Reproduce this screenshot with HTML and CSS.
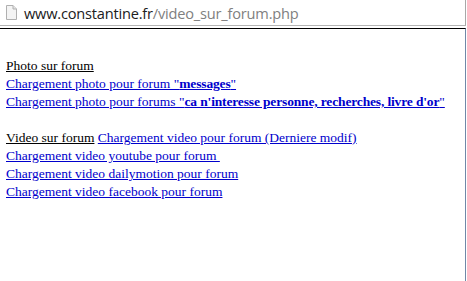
FILE: index.html
```html
<!DOCTYPE html>
<html>
<head>
	<meta charset="UTF-8">
	<title>video sur forum</title>
	<link rel="stylesheet" href="styles.css">
</head>
<body>
	<div class="frame">
		<div class="address-bar">
			<svg class="page-icon" width="11" height="15" viewBox="0 0 11 15">
				<path d="M0.5 0.5 H7 L10.5 4 V14.5 H0.5 Z" fill="#f4f4f4" stroke="#b0b0b0"/>
				<path d="M7 0.5 V4 H10.5" fill="#e4e4e4" stroke="#b0b0b0"/>
			</svg>
			<span class="host">www.constantine.fr</span><span class="path">/video_sur_forum.php</span>
		</div>
		<div class="page">
			<br>
			<u>Photo sur forum</u><br>
			<a href="#">Chargement photo pour forum "<b>messages</b>"</a><br>
			<a href="#">Chargement photo pour forums "<b>ca n'interesse personne, recherches, livre d'or</b>"</a><br>
			<br>
			<u>Video sur forum</u> <a href="#">Chargement video pour forum (Derniere modif)</a><br>
			<a href="#">Chargement video youtube pour forum&nbsp;</a><br>
			<a href="#">Chargement video dailymotion pour forum</a><br>
			<a href="#">Chargement video facebook pour forum</a>
		</div>
	</div>
</body>
</html>
```

FILE: styles.css
```css
html {
	background-color: #fff;
}
body {
	margin: 0;
	padding: 0;
	background-color: #fff;
}
.frame {
	width: 466px;
	height: 281px;
	overflow: hidden;
}
.address-bar {
	height: 25px;
	border-bottom: 1px solid #b4b4b4;
	border-right: 1px solid #a8a8a8;
	display: flex;
	align-items: center;
	padding-left: 6px;
	font-family: "Open Sans", "Noto Sans", sans-serif;
	font-size: 14.6px;
	letter-spacing: -0.2px;
}
.page-icon {
	margin-right: 7px;
	margin-top: -1px;
}
.host {
	color: #202020;
}
.path {
	color: #808080;
}
.page {
	height: 252px;
	margin-top: 2px;
	border-top: 1px solid #000;
	border-right: 1px solid #7088a8;
	padding: 10px 6px 0;
	font-family: "Liberation Serif", "Times New Roman", serif;
	font-size: 13.5px;
	line-height: 18px;
	color: #000;
}
.page a {
	color: #0000cc;
}
.page b {
	letter-spacing: -0.15px;
}
```
